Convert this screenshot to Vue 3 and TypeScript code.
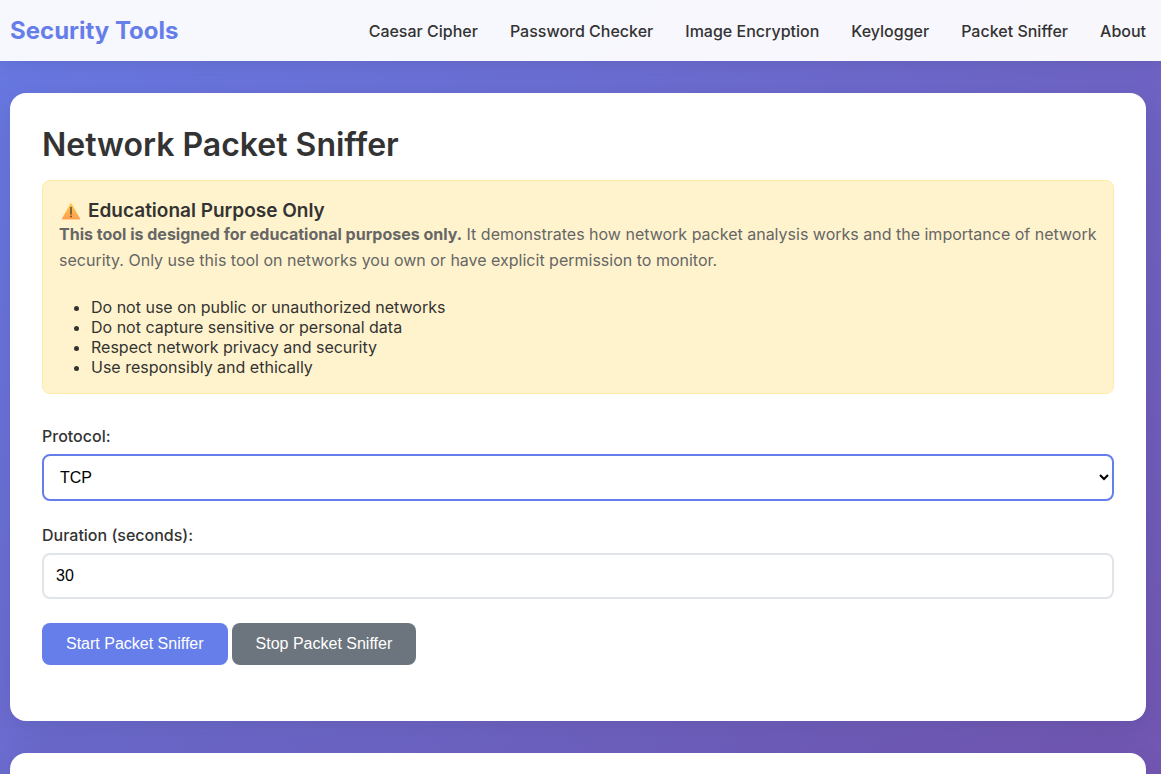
<script setup lang="ts">
import { ref } from 'vue'

const links: string[] = ['Caesar Cipher', 'Password Checker', 'Image Encryption', 'Keylogger', 'Packet Sniffer', 'About']
const rules: string[] = [
  'Do not use on public or unauthorized networks',
  'Do not capture sensitive or personal data',
  'Respect network privacy and security',
  'Use responsibly and ethically',
]
const protocol = ref('TCP')
const duration = ref(30)
</script>

<template>
  <div class="page">
    <header class="navbar">
      <a class="brand" href="#">Security Tools</a>
      <nav class="links">
        <a v-for="link in links" :key="link" href="#">{{ link }}</a>
      </nav>
    </header>
    <main class="content">
      <section class="card">
        <h1>Network Packet Sniffer</h1>
        <div class="warning">
          <h2>
            <svg class="warn-icon" viewBox="0 0 20 18" aria-hidden="true">
              <defs>
                <linearGradient id="warn-fill" x1="0" y1="0" x2="0" y2="1">
                  <stop offset="0" stop-color="#fdc53f" />
                  <stop offset="1" stop-color="#ffa050" />
                </linearGradient>
              </defs>
              <path d="M10 1.4 18.9 17.1H1.1Z" fill="url(#warn-fill)" stroke="url(#warn-fill)" stroke-width="0.8" stroke-linejoin="round" />
              <path d="M10 5.4V12" stroke="#4b4044" stroke-width="1.4" stroke-linecap="round" />
              <circle cx="10" cy="14.4" r="0.9" fill="#4b4044" />
            </svg>
            Educational Purpose Only
          </h2>
          <p><strong>This tool is designed for educational purposes only.</strong> It demonstrates how network packet analysis works and the importance of network security. Only use this tool on networks you own or have explicit permission to monitor.</p>
          <ul>
            <li v-for="rule in rules" :key="rule">{{ rule }}</li>
          </ul>
        </div>
        <form @submit.prevent>
          <div class="field">
            <label for="protocol">Protocol:</label>
            <select id="protocol" v-model="protocol">
              <option>TCP</option>
              <option>UDP</option>
              <option>ICMP</option>
            </select>
          </div>
          <div class="field">
            <label for="duration">Duration (seconds):</label>
            <input id="duration" v-model="duration" type="number" />
          </div>
          <div class="actions">
            <button type="submit" class="primary">Start Packet Sniffer</button>
            <button type="button" class="secondary">Stop Packet Sniffer</button>
          </div>
        </form>
      </section>
      <section class="card next"></section>
    </main>
  </div>
</template>

<style>
body {
  overflow: hidden;
}
</style>

<style scoped>
* {
  box-sizing: border-box;
  margin: 0;
}
.page {
  height: 100vh;
  overflow: hidden;
  background: linear-gradient(135deg, #667eea -10%, #764ba2 95%) 0 0 / 100% 1600px;
  font-family: Inter, "Liberation Sans", sans-serif;
  font-size: 16px;
  color: #333;
}
.navbar {
  display: flex;
  align-items: center;
  justify-content: space-between;
  padding: 16px 15px 16px 10px;
  background: rgba(255, 255, 255, 0.95);
  box-shadow: 0 2px 20px rgba(0, 0, 0, 0.1);
}
.brand {
  font-size: 24px;
  line-height: 29px;
  font-weight: 700;
  color: #667eea;
  text-decoration: none;
}
.links {
  display: flex;
  gap: 32px;
}
.links a {
  color: #333;
  font-weight: 500;
  text-decoration: none;
}
.content {
  padding: 32px 15px 0 10px;
}
.card {
  background: #fff;
  border-radius: 16px;
  padding: 32px 32px 56px;
  margin-bottom: 32px;
  box-shadow: 0 8px 32px rgba(0, 0, 0, 0.1);
}
.next {
  min-height: 200px;
}
h1 {
  font-size: 32px;
  line-height: 39px;
  font-weight: 600;
  margin-bottom: 16px;
}
.warning {
  background: #fff3cd;
  border: 1px solid #ffeaa7;
  border-radius: 8px;
  padding: 16px;
  margin-bottom: 32px;
}
h2 {
  display: flex;
  align-items: center;
  gap: 7px;
  padding: 4px 0 0 2px;
  font-size: 19px;
  line-height: 20px;
  font-weight: 600;
}
.warn-icon {
  width: 20px;
  height: 18px;
}
.warning p {
  line-height: 26px;
  color: #666;
  margin-bottom: 24px;
}
.warning ul {
  padding-left: 32px;
}
.warning li {
  line-height: 20px;
}
.field {
  margin-bottom: 24px;
}
label {
  display: block;
  line-height: 20px;
  font-weight: 500;
  margin-bottom: 8px;
}
select,
input {
  display: block;
  width: 100%;
  height: 46px;
  padding: 12px;
  border: 2px solid #e1e5e9;
  border-radius: 8px;
  background: #fff;
  font-family: "Liberation Sans", sans-serif;
  font-size: 16px;
  color: #000;
}
select {
  height: 47px;
  border-color: #667eea;
}
.actions {
  display: flex;
  gap: 4px;
}
button {
  padding: 12px 24px;
  border: 0;
  border-radius: 8px;
  font-family: "Liberation Sans", sans-serif;
  font-size: 16px;
  line-height: 18px;
  color: #fff;
  cursor: pointer;
}
.primary {
  background: #667eea;
}
.secondary {
  background: #6c757d;
}
</style>
